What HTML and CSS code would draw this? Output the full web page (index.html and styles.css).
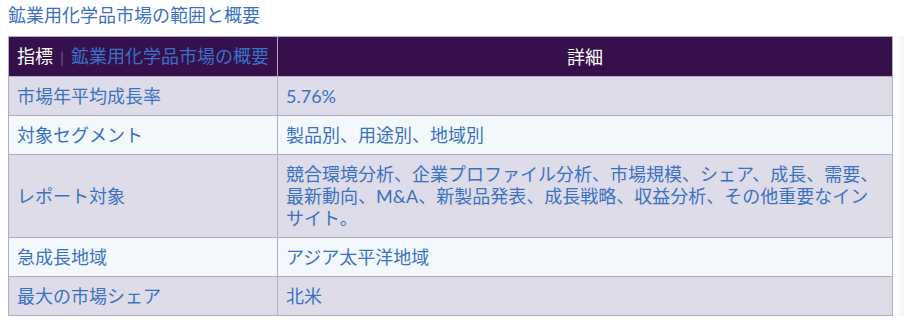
FILE: index.html
```html
<!DOCTYPE html>
<html lang="ja">
<head>
<meta charset="utf-8">
<link rel="stylesheet" href="styles.css">
</head>
<body>
<div class="wrap">
  <h2 class="title">鉱業用化学品市場の範囲と概要</h2>
  <div class="scroller">
    <table class="summary">
      <colgroup><col class="c1"><col class="c2"></colgroup>
      <thead>
        <tr>
          <th class="th-left"><span class="th-white">指標</span><span class="sep">|</span><span class="th-blue">鉱業用化学品市場の概要</span></th>
          <th class="th-center">詳細</th>
        </tr>
      </thead>
      <tbody>
        <tr class="odd"><td>市場年平均成長率</td><td>5.76%</td></tr>
        <tr class="even"><td>対象セグメント</td><td>製品別、用途別、地域別</td></tr>
        <tr class="odd"><td>レポート対象</td><td>競合環境分析、企業プロファイル分析、市場規模、シェア、成長、需要、最新動向、M&amp;A、新製品発表、成長戦略、収益分析、その他重要なインサイト。</td></tr>
        <tr class="even"><td>急成長地域</td><td>アジア太平洋地域</td></tr>
        <tr class="odd"><td>最大の市場シェア</td><td>北米</td></tr>
      </tbody>
    </table>
  </div>
</div>
</body>
</html>
```

FILE: styles.css
```css
html, body {
  margin: 0;
  padding: 0;
  background: #ffffff;
}
body {
  font-family: Lato, "Noto Sans CJK JP", sans-serif;
  color: #3a72c0;
}
.wrap {
  padding: 2px 8px 0 8px;
}
.title {
  margin: 0 0 8px 0;
  font-size: 18px;
  font-weight: normal;
  line-height: 26px;
  color: #3a72c0;
}
.scroller {
  width: 896px;
  box-shadow: inset -11px 0 8px -8px rgba(0,0,0,0.06);
}
.summary {
  width: 885px;
  border-collapse: collapse;
  border: 1px solid #b1adc6;
  font-size: 18px;
  line-height: 22px;
}
.c1 { width: 269px; }
.summary th, .summary td {
  border: 1px solid #b1adc6;
  padding: 8px 8px;
  text-align: left;
  vertical-align: middle;
  font-weight: normal;
}
.summary thead tr {
  background: #35104a;
}
.th-left {
  white-space: nowrap;
  padding-right: 4px !important;
}
.th-white { color: #ffffff; }
.sep {
  color: #6e4f9a;
  margin: 0 7px 0 7px;
  font-size: 16px;
}
.th-blue { color: #3a72c8; }
.th-center {
  text-align: center !important;
  color: #ffffff;
}
.odd { background: #dfdcea; }
.even { background: #f3f8fc; }
```
